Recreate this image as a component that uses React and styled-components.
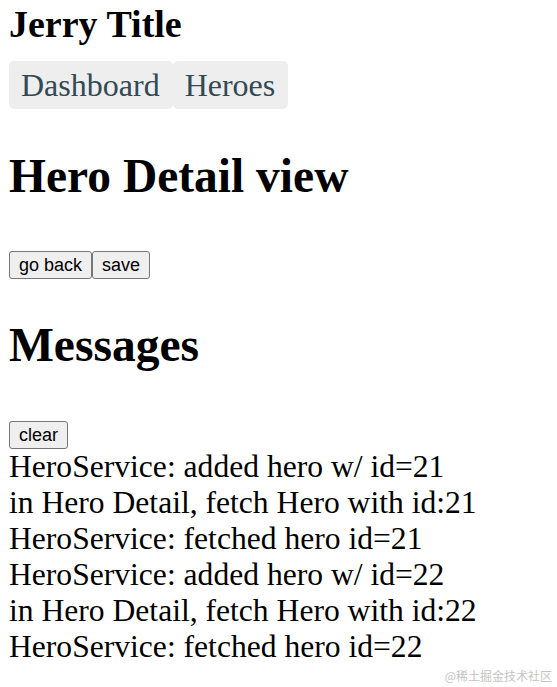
import styled, { createGlobalStyle } from "styled-components"

const Global = createGlobalStyle`
  body {
    margin: 0;
    background: #fff;
    font-family: "Liberation Serif", "Times New Roman", serif;
    color: #000;
  }
`;

const Page = styled.div`
  position: relative;
  min-height: 687px;
  padding: 2px 9px 0;
  box-sizing: border-box;
`;

const AppTitle = styled.h2`
  margin: 0;
  font-size: 38px;
  line-height: 44px;
  font-weight: bold;
`;

const Nav = styled.nav`
  display: flex;
  margin-top: 15px;
`;

const NavLink = styled.a`
  display: inline-block;
  padding: 6px 13px 6px 12px;
  font-size: 32px;
  line-height: 36px;
  color: #334953;
  background: #eee;
  border-radius: 5px;
  text-decoration: none;
`;

const Heading = styled.h1`
  margin: ${p => p.$top}px 0 0;
  font-size: 47.5px;
  line-height: 55px;
  font-weight: bold;
`;

const Actions = styled.div`
  display: flex;
  margin-top: ${p => p.$top}px;
`;

const Button = styled.button`
  font-family: "Liberation Sans", Arial, sans-serif;
  font-size: 18px;
  line-height: 22px;
  padding: 2px 9px;
  color: #000;
  background: #efefef;
  border: 1px solid #767676;
  border-radius: 3px;
`;

const MessageList = styled.div`
  font-size: 31.6px;
  line-height: 36px;
`;

const Watermark = styled.span`
  position: absolute;
  right: 5px;
  bottom: 3px;
  font-family: "Noto Sans CJK SC", sans-serif;
  font-size: 12px;
  color: #c4c4c4;
`;

const messages = [
  "HeroService: added hero w/ id=21",
  "in Hero Detail, fetch Hero with id:21",
  "HeroService: fetched hero id=21",
  "HeroService: added hero w/ id=22",
  "in Hero Detail, fetch Hero with id:22",
  "HeroService: fetched hero id=22",
];

export default function App() {
  return (
    <Page>
      <Global />
      <AppTitle>Jerry Title</AppTitle>
      <Nav>
        <NavLink href="#">Dashboard</NavLink>
        <NavLink href="#">Heroes</NavLink>
      </Nav>
      <Heading $top={40}>Hero Detail view</Heading>
      <Actions $top={47}>
        <Button>go back</Button>
        <Button>save</Button>
      </Actions>
      <Heading $top={39}>Messages</Heading>
      <Actions $top={48}>
        <Button>clear</Button>
      </Actions>
      <MessageList>
        {messages.map((m, i) => (
          <div key={i}>{m}</div>
        ))}
      </MessageList>
      <Watermark>@稀土掘金技术社区</Watermark>
    </Page>
  )
}
